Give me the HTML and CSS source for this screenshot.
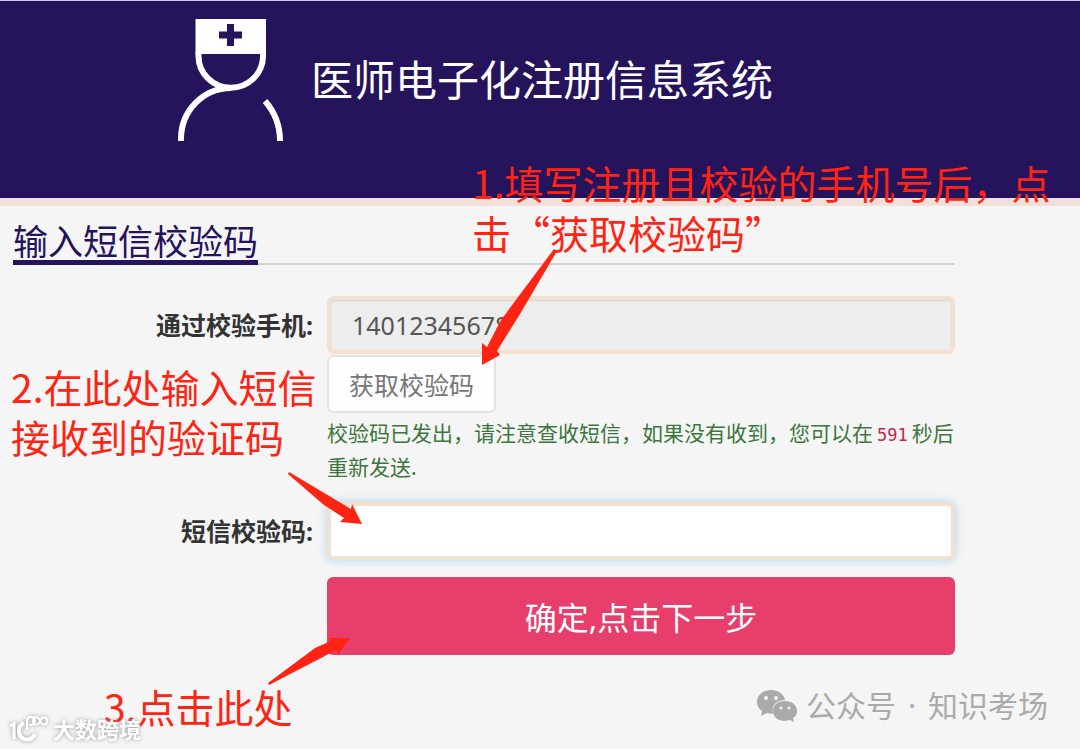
FILE: index.html
```
<!DOCTYPE html>
<html lang="zh-CN">
<head>
    <meta charset="UTF-8">
    <meta name="viewport" content="width=device-width, initial-scale=1.0">
    <title>医师电子化注册信息系统</title>
    <link rel="stylesheet" href="styles.css">
</head>
<body>
    <header class="header">
        <svg class="logo" viewBox="177 18 107 125" fill="none" stroke="#fff" stroke-width="6" aria-hidden="true">
            <path d="M195.500 19h70.500v35h-70.500z" fill="#fff" stroke="none"/>
            <path d="M230.500 24v22M219 35h23" stroke="#25135c" stroke-width="7"/>
            <path d="M198.500 52v4a32 31.500 0 0 0 64.500 0v-4"/>
            <path d="M181 141v-2a50 51 0 0 1 50-51M265 101q15 17 15 40"/>
        </svg>
        <h1 class="title">医师电子化注册信息系统</h1>
    </header>

    <main class="content">
        <div class="section-head">
            <h2 class="section-title">输入短信校验码</h2>
        </div>
        <form class="form">
            <label class="label" for="phone">通过校验手机:</label>
            <input type="text" class="input" id="phone" value="14012345678" readonly>
            <div class="send">
                <button type="button" class="send-button">获取校验码</button>
                <p class="hint">校验码已发出，请注意查收短信，如果没有收到，您可以在<span class="count">591</span>秒后重新发送.</p>
            </div>
            <label class="label" for="code">短信校验码:</label>
            <input type="text" class="input input-active" id="code">
            <button type="submit" class="submit-button">确定,点击下一步</button>
        </form>
    </main>

    <!-- Step notes over the form -->
    <p class="note note-phone">1.填写注册且校验的手机号后，点<br>击“获取校验码”</p>
    <p class="note note-code">2.在此处输入短信<br>接收到的验证码</p>
    <p class="note note-submit">3.点击此处</p>
    <svg class="arrows" width="1080" height="749" viewBox="0 0 1080 749" fill="#fe2414" aria-hidden="true">
        <path d="M554 249L557 251L520 314L497 351L500 355L482 365L482 343L487 347L501 320Z"/>
        <path d="M289 472L351 509L352 504L362 524L340 522L344 518L324 505L288 474Z"/>
        <path d="M268 683L315 648L331 641L328 638L350 638L338 655L336 650L321 658L269 685Z"/>
    </svg>

    <div class="brand">
        <svg class="brand-icon" viewBox="0 0 40 32" fill="none" stroke="#fff" aria-hidden="true">
            <path d="M1 13l4-2v15" stroke-width="3"/>
            <path d="M15 10q-6 3-5 9c1 9 12 10 16 2" stroke-width="4"/>
            <path d="M18 17V7a4 4 0 1 1 4 5h-2" stroke-width="2"/>
            <path d="M31 8c-2-5-7-5-7 0s5 5 7 0 7-5 7 0-5 5-7 0" stroke-width="2"/>
        </svg>
        <span>大数跨境</span>
    </div>
    <div class="account">
        <svg class="account-icon" viewBox="0 0 42 34" aria-hidden="true">
            <path fill="#aaa" d="M14 1C6 1 0 6 0 13c0 4 2 7 5 9l-1 5 6-3 6 1c-2-9 4-14 12-14C27 5 21 1 14 1z"/>
            <path fill="#aaa" d="M28 12c-7 0-12 4-12 10s5 10 12 10l5-1 4 2-1-4c3-2 4-4 4-7 0-6-5-10-12-10z"/>
            <g fill="#f5f5f5"><circle cx="9" cy="9" r="2"/><circle cx="19" cy="9" r="2"/><circle cx="24" cy="19" r="1.500"/><circle cx="32" cy="19" r="1.500"/></g>
        </svg>
        <span>公众号</span>
        <span>·</span>
        <span>知识考场</span>
    </div>
</body>
</html>
```
FILE: styles.css
```
/* Basic reset and global styles */
* {
    margin: 0;
    padding: 0;
    box-sizing: border-box;
}
body {
    position: relative;
    min-height: 100vh;
    font-family: 'Noto Sans', 'Noto Sans CJK SC', sans-serif;
    background-color: #f5f5f5;
    color: #333;
}
button,
input {
    font-family: inherit;
}
/* Header */
.header {
    display: flex;
    align-items: flex-start;
    gap: 27px;
    height: 206px;
    padding: 17px 20px 0 177px;
    background-color: #25135c;
    border-top: 1px solid #cfcaf5;
    border-bottom: 8px solid #f0e0d9;
}
.logo {
    width: 107px;
    height: 125px;
}
.title {
    margin-top: 30px;
    font-size: 42px;
    line-height: 60px;
    font-weight: 400;
    font-family: 'Noto Sans CJK SC', sans-serif;
    color: #fff;
}
/* Form area */
.content {
    padding: 14px 125px 94px 13px;
}
.section-head {
    display: flex;
    align-items: flex-end;
    border-bottom: 2px solid #d2d2d2;
}
.section-title {
    margin-bottom: -2px;
    border-bottom: 5px solid #25135c;
    font-size: 35px;
    line-height: 40px;
    font-weight: 400;
    font-family: 'Noto Sans CJK SC', sans-serif;
    color: #25135c;
}
.form {
    display: grid;
    grid-template-columns: 314px 1fr;
    align-items: center;
    margin-top: 31px;
}
.label {
    padding-right: 14px;
    font-size: 25px;
    line-height: 34px;
    font-weight: 700;
    text-align: right;
}
.input {
    width: 100%;
    height: 58px;
    padding: 0 21px;
    border: 4px solid #f2e1d1;
    border-radius: 7px;
    background-color: #ededed;
    font-size: 25px;
    color: #555;
    outline: none;
    box-shadow: inset 0 1px 2px rgba(0, 0, 0, 0.1);
}
.input-active {
    background-color: #fff;
    box-shadow: 0 0 10px rgba(102, 175, 233, 0.5);
}
.send,
.submit-button {
    grid-column: 2;
}
.send {
    padding: 1px 0 18px;
}
.send-button {
    display: block;
    height: 58px;
    padding: 0 20px;
    border: 2px solid #e3e3e3;
    border-radius: 6px;
    background-color: #fdfdfd;
    font-size: 25px;
    color: #777;
}
.hint {
    margin-top: 3px;
    font-size: 21px;
    line-height: 34px;
    color: #3c763d;
}
.count {
    padding: 0 4px;
    font-family: 'DejaVu Sans Mono', monospace;
    font-size: 17px;
    line-height: 17px;
    color: #c7254e;
}
.submit-button {
    height: 78px;
    margin-top: 17px;
    border: none;
    border-radius: 6px;
    background-color: #e83e6c;
    font-size: 32px;
    color: #fff;
}
/* Red step notes */
.note {
    position: absolute;
    font-family: 'Noto Sans CJK SC', sans-serif;
    font-size: 39px;
    line-height: 50px;
    white-space: nowrap;
    color: #fe2414;
}
.note-phone {
    top: 157px;
    left: 472px;
}
.note-code {
    top: 361px;
    left: 11px;
}
.note-submit {
    top: 681px;
    left: 104px;
}
.arrows {
    position: absolute;
    top: 0;
    left: 0;
    pointer-events: none;
}
/* Corner marks */
.brand,
.account {
    position: absolute;
    display: flex;
    align-items: center;
    white-space: nowrap;
}
.brand {
    bottom: 4px;
    left: 9px;
    gap: 4px;
    font-size: 22px;
    line-height: 32px;
    font-weight: 700;
    color: #fff;
    filter: drop-shadow(0 0 2px #999);
}
.brand-icon {
    width: 40px;
    height: 32px;
}
.account {
    right: 32px;
    bottom: 23px;
    gap: 12px;
    font-size: 30px;
    line-height: 40px;
    color: #aaa;
}
.account-icon {
    width: 42px;
    height: 34px;
    margin-right: -5px;
}
```
